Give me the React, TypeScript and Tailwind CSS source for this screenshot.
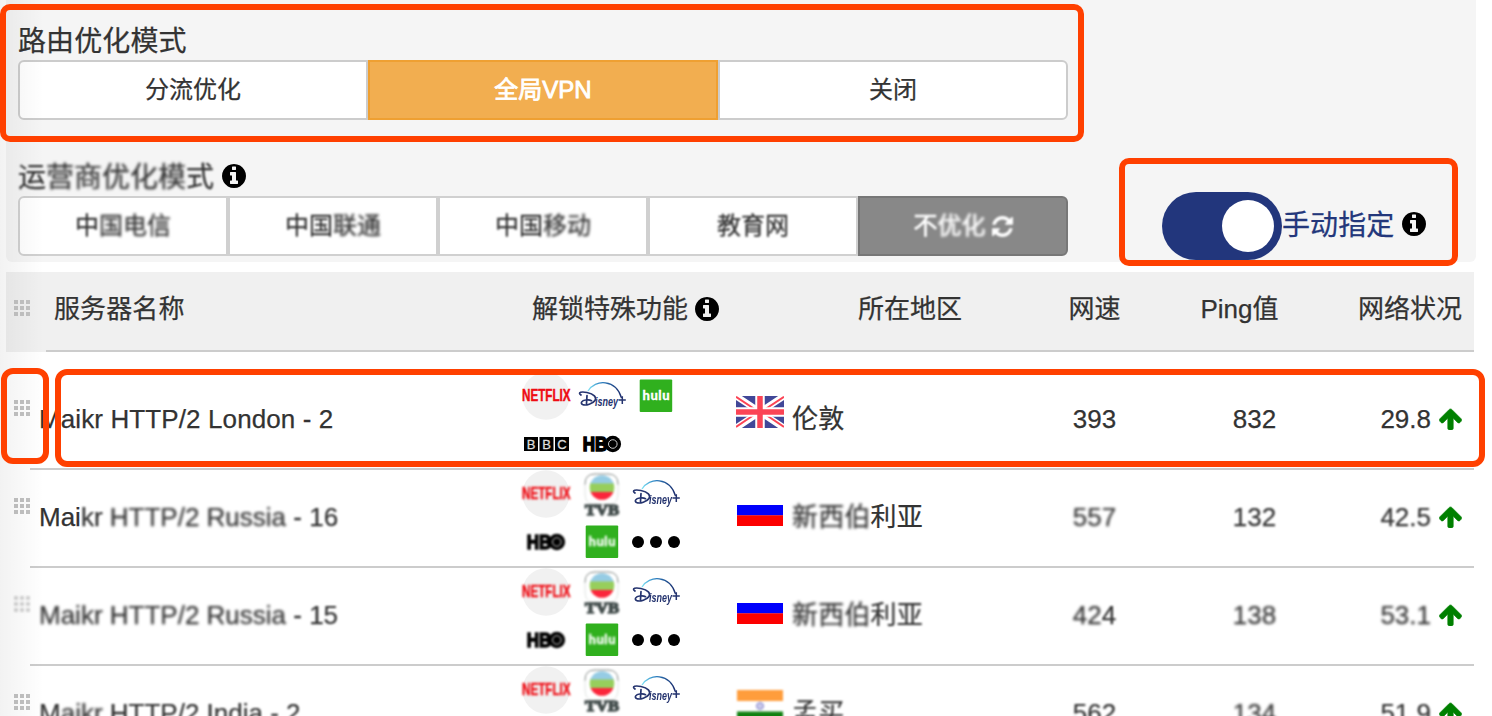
import React from "react";

type Seg = [text: string, blur?: 0 | 1 | 2];

const BLUR = ["", "blur-[0.9px]", "blur-[1.5px]"];

function Soft({ segs }: { segs: Seg[] }) {
  return (
    <>
      {segs.map(([t, b], i) => (
        <span key={i} className={`inline-block whitespace-pre ${BLUR[b ?? 0]}`}>
          {t}
        </span>
      ))}
    </>
  );
}

function InfoIcon({ className = "" }: { className?: string }) {
  return (
    <svg viewBox="128 128 1536 1536" className={`size-6 shrink-0 fill-black ${className}`}>
      <path d="M1152 1376v-160q0-14-9-23t-23-9h-96v-512q0-14-9-23t-23-9h-320q-14 0-23 9t-9 23v160q0 14 9 23t23 9h96v320h-96q-14 0-23 9t-9 23v160q0 14 9 23t23 9h448q14 0 23-9t9-23zm-128-896v-160q0-14-9-23t-23-9h-192q-14 0-23 9t-9 23v160q0 14 9 23t23 9h192q14 0 23-9t9-23zm640 416q0 209-103 385.5t-279.5 279.5-385.5 103-385.5-103-279.5-279.5-103-385.5 103-385.5 279.5-279.5 385.5-103 385.5 103 279.5 279.5 103 385.5z" />
    </svg>
  );
}

function RefreshIcon() {
  return (
    <svg viewBox="0 0 1536 1536" className="ml-1.5 size-[21px] fill-white blur-[0.8px]">
      <path d="M1511 928q0 5-1 7-64 268-268 434.5t-478 166.5q-146 0-282.500-55t-243.500-157l-129 129q-19 19-45 19t-45-19-19-45v-448q0-26 19-45t45-19h448q26 0 45 19t19 45-19 45l-137 137q71 66 161 102t187 36q134 0 250-65t186-179q11-17 53-117 8-23 30-23h192q13 0 22.500 9.500t9.500 22.500zm25-800v448q0 26-19 45t-45 19h-448q-26 0-45-19t-19-45 19-45l138-138q-148-137-349-137-134 0-250 65t-186 179q-11 17-53 117-8 23-30 23h-199q-13 0-22.500-9.500t-9.500-22.500v-7q65-268 270-434.500t480-166.500q146 0 284 55.500t245 156.500l130-129q19-19 45-19t45 19 19 45z" />
    </svg>
  );
}

function ArrowUp({ soft }: { soft: boolean }) {
  return (
    <svg viewBox="117 128 1558 1536" className={`ml-2 h-[22px] w-[23px] fill-[#008000] stroke-[#008000] [stroke-width:40] ${soft ? "blur-[0.6px]" : ""}`}>
      <path d="M1675 971q0 51-37 90l-75 75q-38 38-91 38-54 0-90-38l-294-293v704q0 52-37.5 84.5t-90.5 32.5h-128q-53 0-90.5-32.5t-37.5-84.5v-704l-294 293q-36 38-90 38t-90-38l-75-75q-38-38-38-90 0-53 38-91l651-651q35-37 90-37 54 0 91 37l651 651q37 39 37 91z" />
    </svg>
  );
}

function Handle({ soft }: { soft?: boolean }) {
  return (
    <div className={`grid size-4 grid-cols-3 gap-0.5 ${soft ? "opacity-70 blur-[0.9px]" : ""}`}>
      {Array.from({ length: 9 }, (_, i) => (
        <i key={i} className="size-4 max-h-1 max-w-1 bg-[#c2c2c2]" />
      ))}
    </div>
  );
}

type Brand = "netflix" | "disney" | "hulu" | "bbc" | "hbo" | "tvb" | "more";

function Logo({ brand, soft }: { brand: Brand; soft: boolean }) {
  const b = soft ? "blur-[0.9px]" : "";
  const b2 = soft ? "blur-[0.7px]" : "";
  return (
    <svg viewBox="0 0 48 48" className="size-12 overflow-visible">
      {brand === "netflix" && (
        <>
          <circle cx="24" cy="24" r="23.7" fill="#f1f1f1" />
          <text x="0" y="28.7" fontFamily="Liberation Sans, sans-serif" fontWeight="700" fontSize="17" fill="#ee0c14" stroke="#ee0c14" strokeWidth=".5" textLength="48.5" lengthAdjust="spacingAndGlyphs" className={b}>NETFLIX</text>
        </>
      )}
      {brand === "disney" && (
        <g className={b2}>
          <defs>
            <linearGradient id="arc" x1="0" x2="1">
              <stop offset="0" stopColor="#7fe3f5" />
              <stop offset=".4" stopColor="#2a7fc0" />
              <stop offset="1" stopColor="#1c2c6c" />
            </linearGradient>
          </defs>
          <path d="M10 19C17 7 38 7 43.500 26" fill="none" stroke="url(#arc)" strokeWidth="1.300" />
          <path d="M3 23C-1 20 4 19.500 9 20.500c7 1.500 10 5 8 8-2 3-9 5.500-12.500 4-2.500-1.500-.5-4 3-4.500 3-.5 5 0 6 .7M9 23.500l-.5 8" fill="none" stroke="#25346f" strokeWidth="1.700" strokeLinecap="round" />
          <text x="17" y="33.500" fontFamily="Liberation Sans, sans-serif" fontStyle="italic" fontWeight="700" fontSize="13.500" fill="#25346f" textLength="23" lengthAdjust="spacingAndGlyphs">isney</text>
          <path d="M40.500 28h7.300M44.300 24.300v7.700" stroke="#25346f" strokeWidth="1.500" />
        </g>
      )}
      {brand === "hulu" && (
        <>
          <rect x="7.7" y="7.5" width="32.5" height="32.5" rx="1" fill="#30b01e" className={b2} />
          <text x="10.5" y="28" fontFamily="Lato, sans-serif" fontWeight="900" fontSize="13" fill="#fff" stroke="#fff" strokeWidth=".3" textLength="27" lengthAdjust="spacing" className={b}>hulu</text>
        </>
      )}
      {brand === "bbc" && (
        <>
          {["B", "B", "C"].map((c, i) => (
            <g key={i}>
              <rect x={2 + i * 15.5} y="17" width="14" height="14" fill="#000" />
              <text x={9 + i * 15.5} y="28.5" textAnchor="middle" fontFamily="Liberation Sans, sans-serif" fontSize="13" fill="#ddd" stroke="#ddd" strokeWidth=".3">{c}</text>
            </g>
          ))}
        </>
      )}
      {brand === "hbo" && (
        <g className={b}>
          <text x="4.8" y="31.3" fontFamily="Liberation Sans, sans-serif" fontWeight="700" fontSize="20" fill="#000" stroke="#000" strokeWidth="1.5" textLength="24.500" lengthAdjust="spacingAndGlyphs">HB</text>
          <circle cx="34.8" cy="24" r="8.3" fill="#000" />
          <circle cx="34.8" cy="24" r="4.3" fill="none" stroke="#ccc" strokeWidth="1" />
        </g>
      )}
      {brand === "tvb" && (
        <g className={b}>
          <path d="M7 15v-1q0-10 10-10h13q10 0 10 10v1" fill="none" stroke="#858b88" strokeWidth="1" />
          <path d="M7 14v10q0 9 7 10h19q7-1 7-10V14" fill="none" stroke="#dfe3e1" strokeWidth="1" />
          <clipPath id="globe"><circle cx="24" cy="17.5" r="12.3" /></clipPath>
          <g clipPath="url(#globe)">
            <rect x="11" y="4" width="26" height="10" fill="#96cce4" />
            <rect x="11" y="13.5" width="26" height="9" fill="#97ce5c" />
            <rect x="11" y="22" width="26" height="9" fill="#fb263b" />
          </g>
          <text x="7" y="45" fontFamily="Liberation Serif, serif" fontWeight="700" fontSize="15.5" fill="#46504f" stroke="#46504f" strokeWidth="1.5" textLength="34" lengthAdjust="spacingAndGlyphs">TVB</text>
        </g>
      )}
      {brand === "more" && (
        <g className={b2}>
          <circle cx="6" cy="24" r="6" />
          <circle cx="24" cy="24" r="6" />
          <circle cx="42" cy="24" r="6" />
        </g>
      )}
    </svg>
  );
}

type FlagName = "uk" | "ru" | "in";

function Flag({ name }: { name: FlagName }) {
  return (
    <svg viewBox="0 0 48 32" className={`h-8 w-12 ${name === "in" ? "blur-[0.9px]" : name === "ru" ? "blur-[0.6px]" : ""}`}>
      {name === "uk" && (
        <>
          <rect width="48" height="32" fill="#414798" />
          <path d="M0 0l48 32M48 0L0 32" stroke="#fff" strokeWidth="6.5" />
          <path d="M0 .8L20 14M28 17.5L48 31M48 .8L28 14M20 17.5L0 31" stroke="#fb4455" strokeWidth="2" />
          <path d="M24 0v32M0 16h48" stroke="#fff" strokeWidth="9.5" />
          <path d="M24 0v32M0 16h48" stroke="#fb4455" strokeWidth="5.5" />
        </>
      )}
      {name === "ru" && (
        <>
          <rect x="1" width="46" height="11" fill="#fff" />
          <rect x="1" y="11" width="46" height="10.5" fill="#0000fc" />
          <rect x="1" y="21.3" width="46" height="10.7" fill="#fc0000" />
        </>
      )}
      {name === "in" && (
        <>
          <rect x="1" width="46" height="11" fill="#ff9d3c" />
          <rect x="1" y="21.5" width="46" height="10.5" fill="#108010" />
          <circle cx="24" cy="16" r="3.5" fill="#c9c9ea" stroke="#8484cc" />
        </>
      )}
    </svg>
  );
}

interface Server {
  name: Seg[];
  logos: Brand[];
  flag: FlagName;
  region: Seg[];
  speed: Seg[];
  ping: Seg[];
  status: Seg[];
  softHandle?: boolean;
}

const servers: Server[] = [
  {
    name: [["Maikr HTTP/2 London - 2"]],
    logos: ["netflix", "disney", "hulu", "bbc", "hbo"],
    flag: "uk", region: [["伦敦"]], speed: [["393"]], ping: [["832"]], status: [["29.8"]],
  },
  {
    name: [["Mai"], ["kr", 1], [" HTTP/2 Russia ", 2], ["- 16", 1]],
    logos: ["netflix", "tvb", "disney", "hbo", "hulu", "more"],
    flag: "ru", region: [["新西伯", 2], ["利亚"]], speed: [["557", 2]], ping: [["132", 1]], status: [["42.5", 1]],
  },
  {
    name: [["Maikr", 2], [" HTTP/2 Russia ", 2], ["- 15", 1]],
    logos: ["netflix", "tvb", "disney", "hbo", "hulu", "more"],
    flag: "ru", region: [["新西伯", 2], ["利亚", 1]], speed: [["42", 2], ["4", 1]], ping: [["138", 2]], status: [["53.1", 2]],
    softHandle: true,
  },
  {
    name: [["M", 1], ["aikr", 2], [" HTTP/2 India ", 1], ["- 2", 1]],
    logos: ["netflix", "tvb", "disney", "hbo", "hulu", "more"],
    flag: "in", region: [["孟买", 1]], speed: [["562", 1]], ping: [["134", 2]], status: [["51.9", 1]],
  },
];

function ServerRow({ s, soft }: { s: Server; soft: boolean }) {
  return (
    <div className="flex h-[98px] shrink-0 pl-3.5">
      <div className="w-4 pt-7"><Handle soft={s.softHandle} /></div>
      <div className="flex w-[1444px] border-b-2 border-[#ccc] leading-[94px]">
        <div className={`w-[492px] pl-[9px] whitespace-nowrap ${soft ? "" : "tracking-[0.11px]"}`}><Soft segs={s.name} /></div>
        <div className="grid h-24 w-[214px] grid-cols-[56px_54px_48px] content-start">
          {s.logos.map((l) => <Logo key={l} brand={l} soft={soft} />)}
        </div>
        <div className="flex w-[300px]">
          <div className="mr-2 pt-6"><Flag name={s.flag} /></div>
          <div className="leading-[95px] tracking-[0.2px]"><Soft segs={s.region} /></div>
        </div>
        <div className="w-[117px] text-center"><Soft segs={s.speed} /></div>
        <div className="w-[203px] text-center"><Soft segs={s.ping} /></div>
        <div className="flex h-[94px] grow items-center justify-end pr-3">
          <div><Soft segs={s.status} /></div>
          <ArrowUp soft={soft} />
        </div>
      </div>
    </div>
  );
}

const carriers: Seg[][] = [
  [["中", 1], ["国电信", 2]],
  [["中国", 1], ["联通", 2]],
  [["中国", 1], ["移动", 2]],
  [["教育网", 1]],
];

const MARK = "pointer-events-none absolute border-6 border-[#ff4000]";

export default function App() {
  return (
    <div className="relative flex h-[716px] w-[1492px] flex-col overflow-hidden bg-white font-['Liberation_Sans','Noto_Sans_CJK_SC',sans-serif] text-[26px] text-[#333] [-webkit-text-stroke:0.25px_currentColor]">
      <section className="ml-1.5 flex h-[262px] w-[1470px] shrink-0 rounded-b-md bg-[#f5f5f5] pl-3">
        <div className="w-[1050px]">
          <h2 className="h-[60px] pt-[22px] text-[28px] leading-[40px] tracking-[0.1px]">路由优化模式</h2>
          <div className="flex h-[60px] text-center text-[24px] leading-[56px]">
            <button className="w-[350px] rounded-l-md border-2 border-[#ccc] bg-white">分流优化</button>
            <button className="w-[350px] border-2 border-[#efa032] bg-[#f2ae50] text-white [-webkit-text-stroke:0.8px_white]">全局VPN</button>
            <button className="w-[350px] rounded-r-md border-2 border-[#ccc] bg-white">关闭</button>
          </div>
          <h2 className="flex h-[76px] items-center pt-9 text-[28px] leading-[40px]">
            <span className="pt-[3px]"><Soft segs={[["运", 1], ["营商优化模", 2], ["式", 1]]} /></span>
            <InfoIcon className="ml-2 blur-[0.6px]" />
          </h2>
          <div className="flex h-[60px] text-[24px] leading-[56px]">
            {carriers.map((c, i) => (
              <button key={i} className="w-[210px] border-2 border-[#d0d0d0] bg-white [-webkit-text-stroke:0.3px_#333] first:rounded-l-md">
                <Soft segs={c} />
              </button>
            ))}
            <button className="flex w-[210px] items-center justify-center rounded-r-md border-2 border-[#777] bg-[#888] text-white [-webkit-text-stroke:0.6px_white]">
              <Soft segs={[["不", 1], ["优化", 2]]} />
              <RefreshIcon />
            </button>
          </div>
        </div>
        <div className="mt-48 ml-[94px] flex h-[68px] items-center self-start text-[28px] text-[#23377b]">
          <div className="flex h-[68px] w-[120px] items-center justify-end rounded-full bg-[#22367c] pr-2">
            <div className="size-[52px] rounded-full bg-white" />
          </div>
          <span className="tracking-[0.1px]">手动指定</span>
          <InfoIcon className="mb-1 ml-2" />
        </div>
      </section>

      <header className="mt-2.5 ml-1.5 flex h-20 w-[1468px] shrink-0 bg-[#f0f0f0] leading-[75px]">
        <div className="w-10 pt-7 pl-2"><Handle /></div>
        <div className="flex grow border-b-2 border-[#ccc]">
          <div className="w-[486px] pl-2 tracking-[0.1px]">服务器名称</div>
          <div className="flex w-[326px]"><span>解锁特殊功能</span><InfoIcon className="mt-[25px] ml-[7px]" /></div>
          <div className="w-[178px]">所在地区</div>
          <div className="w-[117px] text-center">网速</div>
          <div className="w-[173px] text-center">Ping值</div>
          <div className="grow pr-3 text-right">网络状况</div>
        </div>
      </header>

      <main className="flex flex-col pt-5">
        {servers.map((s, i) => <ServerRow key={i} s={s} soft={i > 0} />)}
      </main>

      <div className="pointer-events-none absolute inset-y-0 left-0 w-11 bg-linear-to-r from-black/5 to-transparent" />
      <div className={`${MARK} top-1 left-0 h-[138px] w-[1084px] rounded-[10px]`} />
      <div className={`${MARK} top-[158px] left-[1119px] h-[108px] w-[339px] rounded-[10px]`} />
      <div className={`${MARK} top-[368px] left-px h-24 w-12 rounded-[12px]`} />
      <div className={`${MARK} top-[369px] left-[55px] h-[98px] w-[1430px] rounded-[12px]`} />
    </div>
  );
}
